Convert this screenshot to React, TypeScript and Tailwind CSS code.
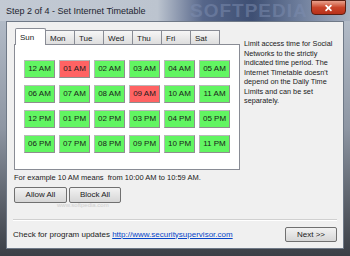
const DAYS = ["Sun", "Mon", "Tue", "Wed", "Thu", "Fri", "Sat"];

const HOURS = [
  "12 AM", "01 AM", "02 AM", "03 AM", "04 AM", "05 AM",
  "06 AM", "07 AM", "08 AM", "09 AM", "10 AM", "11 AM",
  "12 PM", "01 PM", "02 PM", "03 PM", "04 PM", "05 PM",
  "06 PM", "07 PM", "08 PM", "09 PM", "10 PM", "11 PM",
];

// hours blocked on Sunday
const BLOCKED = ["01 AM", "09 AM"];

const INFO = [
  "Limit access time for Social",
  "Networks to the strictly",
  "indicated time period. The",
  "Internet Timetable doesn't",
  "depend on the Daily Time",
  "Limits and can be set",
  "separately.",
];

const FONT = { fontFamily: "Tahoma, 'Liberation Sans', Arial, sans-serif" };

export default function App() {
  return (
    <div
      className="relative w-[350px] h-[256px] flex flex-col overflow-hidden bg-gradient-to-b from-[#b9c2ce] via-[#8e96a3] to-[#3b3f46] text-[8px] text-[#1a1a1a]"
      style={FONT}
    >
      {/* Title bar */}
      <div className="relative h-[21px] flex items-center justify-between pl-[6px] pr-[4px] bg-[linear-gradient(90deg,#c3cad4_0%,#bcc4cf_45%,#56668a_58%,#3e4f73_72%,#6f7f9d_86%,#a7b0bf_100%)]">
        <span className="text-[9px] text-[#1e2430] leading-none pt-[1px]">
          Step 2 of 4 - Set Internet Timetable
        </span>
        <span className="absolute left-[190px] top-[1px] text-[19px] font-bold tracking-[1px] text-[#7d8db0] opacity-50 leading-none">
          SOFTPEDIA
        </span>
        <div className="relative self-start w-[35px] h-[15px] rounded-b-[4px] border border-[#5a1f14] bg-gradient-to-b from-[#e8a08c] via-[#c9442a] to-[#b8301a] flex items-center justify-center">
          <svg viewBox="0 0 10 10" width={9} height={8}>
            <path d="M2 2L8 8M8 2L2 8" stroke="#ffffff" strokeWidth="2.2" strokeLinecap="round" />
          </svg>
        </div>
      </div>

      {/* Client area */}
      <div className="flex-1 mx-[6px] mb-[7px] bg-[#f0f0f0] border border-[#6f7987] flex flex-col">
        <div className="flex pl-[7px] pt-[6px]">
          {/* Left column: tab control */}
          <div className="w-[226px] flex flex-col">
            <div className="flex items-end h-[16px] pl-[1px]">
              {DAYS.map((d, i) => (
                <div
                  key={d}
                  className={
                    i === 0
                      ? "relative z-10 -mb-[1px] h-[17px] w-[31px] bg-white border border-b-0 border-[#898c95] flex items-start pl-[4px] pt-[3px] rounded-t-[2px]"
                      : "h-[14px] w-[29px] bg-gradient-to-b from-[#f6f6f6] to-[#dedede] border border-l-0 border-b-0 border-[#898c95] flex items-start pl-[4px] pt-[2px]"
                  }
                >
                  {d}
                </div>
              ))}
            </div>
            <div className="h-[126px] bg-white border border-[#898c95] pl-[9px] pt-[15px]">
              <div className="grid grid-cols-[repeat(6,31px)] gap-x-[4px] gap-y-[7px]">
                {HOURS.map((h) => (
                  <div
                    key={h}
                    className={
                      BLOCKED.includes(h)
                        ? "h-[18px] flex items-center justify-center bg-[#ff6363] border border-[#b8b8b8] border-b-[#8e8e8e] border-r-[#8e8e8e]"
                        : "h-[18px] flex items-center justify-center bg-[#62f562] border border-[#b8b8b8] border-b-[#8e8e8e] border-r-[#8e8e8e]"
                    }
                  >
                    {h}
                  </div>
                ))}
              </div>
            </div>
            <p className="mt-[3px] leading-[10px] text-[7.5px]">
              For example 10 AM means&nbsp; from 10:00 AM to 10:59 AM.
            </p>
            <div className="flex gap-[2px] mt-[4px]">
              <button className="w-[53px] h-[16px] rounded-[2px] border border-[#707070] bg-gradient-to-b from-[#f2f2f2] to-[#d6d6d6] text-[8px]">
                Allow All
              </button>
              <button className="w-[52px] h-[16px] rounded-[2px] border border-[#707070] bg-gradient-to-b from-[#f2f2f2] to-[#d6d6d6] text-[8px]">
                Block All
              </button>
            </div>
          </div>

          {/* Right column: description */}
          <div className="ml-[4px] mt-[11px] flex flex-col text-[7.3px] leading-[9.5px] whitespace-nowrap text-[#1a1a1a]">
            {INFO.map((line) => (
              <span key={line} className="text-[#1a1a1a]">
                {line}
              </span>
            ))}
          </div>
        </div>

        <span className="absolute left-[57px] top-[201px] text-[6px] text-[#cfcfcf]">
          www.softpedia.com
        </span>

        <div className="mt-auto mx-[6px] border-t border-[#d0d0d0] border-b-white border-b" />
        <div className="flex items-center justify-between pl-[6px] pr-[6px] pt-[6px] pb-[6px]">
          <span>
            Check for program updates{" "}
            <a className="text-[#0645c8] underline" href="#">
              http://www.securitysupervisor.com
            </a>
          </span>
          <button className="w-[52px] h-[15px] rounded-[2px] border border-[#707070] bg-gradient-to-b from-[#f2f2f2] to-[#d6d6d6] text-[8px]">
            Next &gt;&gt;
          </button>
        </div>
      </div>
    </div>
  );
}
